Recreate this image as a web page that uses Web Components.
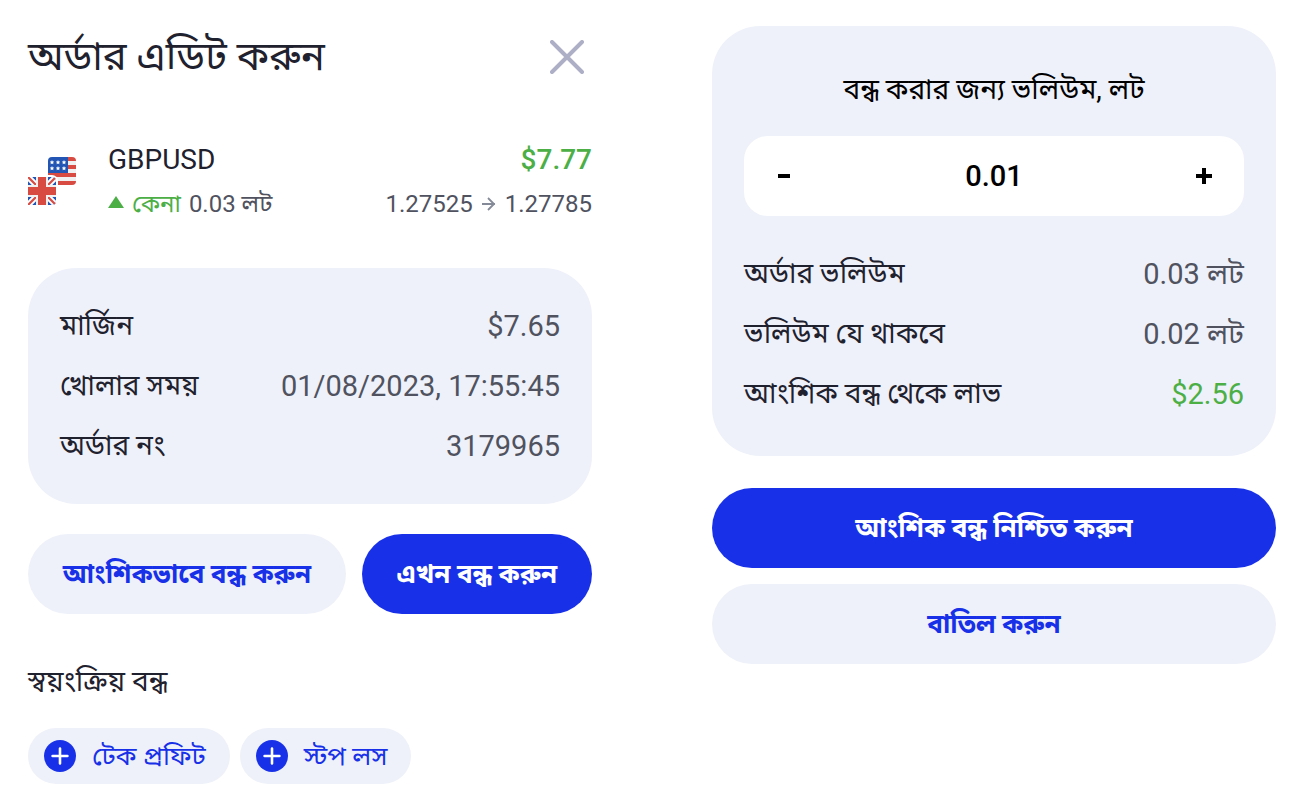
<!DOCTYPE html>
<html lang="bn">
<head>
<meta charset="utf-8">
<meta name="viewport" content="width=device-width, initial-scale=1">
<title>অর্ডার এডিট করুন</title>
<style>
  body {
    margin: 0;
    background: #fff;
    color: #1f222e;
    font-family: Roboto, "Noto Sans Bengali", "Noto Sans", sans-serif;
    font-size: 28px;
    line-height: 40px;
    --surface: #eef1f9;
    --primary: #1831e8;
    --muted: #50535f;
    --positive: #4caf46;
  }
</style>
</head>
<body>
<order-app></order-app>
<script>
const define = (name, html, setup) => {
  const template = document.createElement('template');
  template.innerHTML = html;
  customElements.define(name, class extends HTMLElement {
    constructor() {
      super();
      this.attachShadow({ mode: 'open' }).append(template.content.cloneNode(true));
      if (setup) setup(this.shadowRoot, this);
    }
  });
};

define('info-row', `
  <style>
    :host { display: flex; justify-content: space-between; align-items: center; gap: 16px; height: 60px; white-space: nowrap; }
    .value { color: var(--muted); font-size: 29px; }
    :host([positive]) .value { color: var(--positive); }
  </style>
  <span><slot></slot></span><span class="value"><slot name="value"></slot></span>
`);

define('pill-button', `
  <style>
    :host { display: block; }
    button {
      width: 100%; height: 80px; padding: 0 32px; border: 0; border-radius: 40px;
      background: var(--surface); color: var(--primary);
      font: inherit; font-size: 26px; font-weight: 700; white-space: nowrap; cursor: pointer;
    }
    :host([primary]) button { background: var(--primary); color: #fff; }
  </style>
  <button type="button"><slot></slot></button>
`);

define('add-chip', `
  <style>
    :host { display: block; }
    button {
      display: flex; align-items: center; gap: 16px; height: 56px; padding: 0 24px 0 16px;
      border: 0; border-radius: 28px; background: var(--surface); color: var(--primary);
      font: inherit; font-size: 26px; white-space: nowrap; cursor: pointer;
    }
  </style>
  <button type="button">
    <svg width="32" height="32" viewBox="0 0 32 32" aria-hidden="true">
      <circle cx="16" cy="16" r="16" fill="#1831e8"/>
      <path d="M16 8.6v14.8M8.6 16h14.8" stroke="#fff" stroke-width="2.6" stroke-linecap="round"/>
    </svg>
    <slot></slot>
  </button>
`);

define('flag-pair', `
  <style>:host { display: block; } svg { display: block; }</style>
  <svg width="48" height="50" viewBox="0 0 48 50" aria-hidden="true">
    <defs>
      <clipPath id="us"><rect x="20" width="28" height="28" rx="4"/></clipPath>
      <clipPath id="gb"><path d="M0 20h24a4 4 0 0 1 4 4v20a4 4 0 0 1-4 4H0z"/></clipPath>
    </defs>
    <g clip-path="url(#us)">
      <path fill="#f0f0f0" d="M20 0h28v28H20z"/>
      <path fill="#d84b43" d="M40 0h8v4h-8zM40 8h8v4h-8zM20 16h28v4H20zM20 24h28v4H20z"/>
      <path fill="#2356b4" d="M20 0h20v16H20z"/>
      <g fill="#fff" id="stars"></g>
    </g>
    <path fill="#fff" d="M0 18h24a6 6 0 0 1 6 6v24H0z"/>
    <g clip-path="url(#gb)">
      <path fill="#2356b4" d="M0 20h28v28H0z"/>
      <path stroke="#fff" stroke-width="6" d="M-1 19l30 30M29 19L-1 49"/>
      <path stroke="#d84b43" stroke-width="2.2" d="M-1 19l30 30M29 19L-1 49"/>
      <path fill="#f0f0f0" d="M8 20h12v28H8zM0 28h28v12H0z"/>
      <path fill="#d84b43" d="M10 20h8v28h-8zM0 30h28v8H0z"/>
    </g>
  </svg>
`, root => {
  const star = 'l.7 1.4 1.5.2-1.1 1.1.3 1.6-1.4-.7-1.4.7.3-1.6-1.1-1.1 1.5-.2z';
  const d = [3, 9].flatMap(y => [24, 30, 36].map(x => 'M' + x + ' ' + y + star)).join('');
  root.getElementById('stars').innerHTML = '<path d="' + d + '"/>';
});

define('order-summary', `
  <style>
    :host { display: flex; align-items: center; gap: 32px; margin: 50px 0 42px; white-space: nowrap; }
    .lines { flex: 1; }
    .line { display: flex; justify-content: space-between; align-items: center; height: 44px; }
    .profit { font-weight: 500; color: var(--positive); }
    .detail { font-size: 24px; color: var(--muted); }
    .group { display: flex; align-items: center; gap: 8px; }
    .marker { padding-bottom: 4px; }
    .buy { color: var(--positive); }
  </style>
  <flag-pair></flag-pair>
  <div class="lines">
    <div class="line"><span>GBPUSD</span><span class="profit">$7.77</span></div>
    <div class="line detail">
      <span class="group">
        <svg class="marker" width="16" height="12" viewBox="0 0 16 12" aria-hidden="true"><path d="M8 0l8 12H0z" fill="#4caf46"/></svg>
        <span class="buy">কেনা</span><span>0.03 লট</span>
      </span>
      <span class="group">
        <span>1.27525</span>
        <svg width="16" height="16" viewBox="0 0 16 16" fill="none" stroke="#858a98" stroke-width="1.8" aria-hidden="true"><path d="M1 8h13M7 2l6 6-6 6"/></svg>
        <span>1.27785</span>
      </span>
    </div>
  </div>
`);

define('order-panel', `
  <style>
    :host { display: block; min-width: 0; }
    header { display: flex; justify-content: space-between; align-items: center; height: 62px; }
    h1 { margin: 0; font-size: 40px; font-weight: 400; line-height: 60px; white-space: nowrap; }
    .close { display: flex; width: 50px; height: 50px; padding: 8px; border: 0; background: none; cursor: pointer; }
    .card { padding: 28px 32px; border-radius: 48px; background: var(--surface); }
    .actions { display: flex; gap: 16px; margin-top: 30px; }
    .actions > * { flex: auto; }
    h2 { margin: 48px 0 26px; font-size: 28px; font-weight: 400; }
    .chips { display: flex; gap: 10px; }
  </style>
  <header>
    <h1>অর্ডার এডিট করুন</h1>
    <button class="close" type="button" aria-label="Close">
      <svg width="34" height="34" viewBox="0 0 34 34" aria-hidden="true"><path d="M2 2l30 30M32 2L2 32" stroke="#acafc5" stroke-width="4" stroke-linecap="round"/></svg>
    </button>
  </header>
  <order-summary></order-summary>
  <div class="card">
    <info-row>মার্জিন<span slot="value">$7.65</span></info-row>
    <info-row>খোলার সময়<span slot="value">01/08/2023, 17:55:45</span></info-row>
    <info-row>অর্ডার নং<span slot="value">3179965</span></info-row>
  </div>
  <div class="actions">
    <pill-button>আংশিকভাবে বন্ধ করুন</pill-button>
    <pill-button primary>এখন বন্ধ করুন</pill-button>
  </div>
  <h2>স্বয়ংক্রিয় বন্ধ</h2>
  <div class="chips"><add-chip>টেক প্রফিট</add-chip><add-chip>স্টপ লস</add-chip></div>
`);

define('volume-stepper', `
  <style>
    :host { display: flex; align-items: center; height: 80px; border-radius: 24px; background: #fff; }
    button { display: flex; align-items: center; justify-content: center; width: 80px; height: 80px; padding: 0; border: 0; background: none; cursor: pointer; }
    input { flex: 1; min-width: 0; padding: 0; border: 0; outline: 0; background: none; color: #000; font: inherit; font-size: 29px; font-weight: 500; text-align: center; }
  </style>
  <button type="button" id="less" aria-label="Decrease"><svg width="16" height="16" viewBox="0 0 16 16"><path d="M2 6h12v4H2z"/></svg></button>
  <input id="volume" type="text" inputmode="decimal" value="0.01" aria-label="বন্ধ করার জন্য ভলিউম, লট">
  <button type="button" id="more" aria-label="Increase"><svg width="16" height="16" viewBox="0 0 16 16"><path d="M6 0h4v6h6v4h-6v6H6v-6H0V6h6z"/></svg></button>
`, root => {
  const input = root.getElementById('volume');
  const step = n => { input.value = Math.min(0.03, Math.max(0.01, Number(input.value) + n)).toFixed(2); };
  root.getElementById('less').onclick = () => step(-0.01);
  root.getElementById('more').onclick = () => step(0.01);
});

define('partial-close', `
  <style>
    :host { display: block; min-width: 0; }
    .card { padding: 44px 32px 32px; border-radius: 48px; background: var(--surface); }
    h2 { margin: 0 0 26px; color: #000; font-size: 28px; font-weight: 400; text-align: center; }
    volume-stepper { margin-bottom: 28px; }
    .actions { display: grid; gap: 16px; margin-top: 32px; }
  </style>
  <div class="card">
    <h2>বন্ধ করার জন্য ভলিউম, লট</h2>
    <volume-stepper></volume-stepper>
    <info-row>অর্ডার ভলিউম<span slot="value">0.03 লট</span></info-row>
    <info-row>ভলিউম যে থাকবে<span slot="value">0.02 লট</span></info-row>
    <info-row positive>আংশিক বন্ধ থেকে লাভ<span slot="value">$2.56</span></info-row>
  </div>
  <div class="actions">
    <pill-button primary>আংশিক বন্ধ নিশ্চিত করুন</pill-button>
    <pill-button>বাতিল করুন</pill-button>
  </div>
`);

define('order-app', `
  <style>
    :host { display: grid; grid-template-columns: 1fr 1fr; align-items: start; gap: 120px; padding: 26px 28px 24px; }
  </style>
  <order-panel></order-panel>
  <partial-close></partial-close>
`);
</script>
</body>
</html>
